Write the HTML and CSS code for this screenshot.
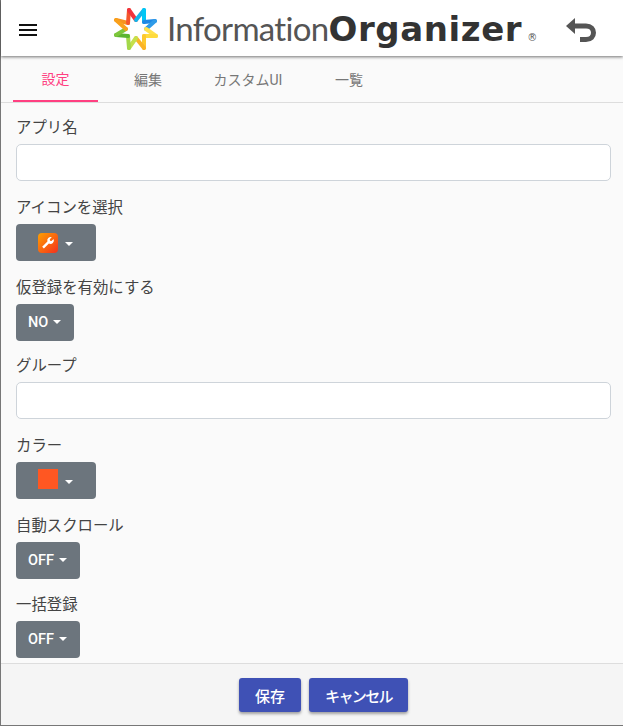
FILE: index.html
```html
<!DOCTYPE html>
<html lang="ja">
  <head>
    <meta charset="UTF-8" />
    <title>Information Organizer</title>
    <link rel="stylesheet" href="styles.css">
  </head>
  <body>
    <div class="page">
      <header class="topbar">
        <svg class="menu-icon" width="18" height="12" viewBox="0 0 18 12">
          <path d="M0 1h18M0 6h18M0 11h18" stroke="#111" stroke-width="2" fill="none" />
        </svg>
        <div class="brand">
          <svg class="brand-mark" width="46" height="44" viewBox="0 0 46 44">
            <g fill="none" stroke-width="4" stroke-linecap="round" stroke-linejoin="round">
              <path d="M3 13L15 16" stroke="#f7931e" />
              <path d="M15 16L16 3" stroke="#f4562c" />
              <path d="M16 3L23 13" stroke="#f0333c" />
              <path d="M23 13L31 3" stroke="#12b5ea" />
              <path d="M31 3L31 15" stroke="#00c6f5" />
              <path d="M31 15L42 14" stroke="#1e88e5" />
              <path d="M42 14L33 22" stroke="#2f9be8" />
              <path d="M33 22L43 29" stroke="#ffe14d" />
              <path d="M43 29L31 29" stroke="#ffdb3d" />
              <path d="M31 29L31 41" stroke="#fdc82f" />
              <path d="M31 41L23 31" stroke="#fbb326" />
              <path d="M23 31L16 41" stroke="#c5e04c" />
              <path d="M16 41L15 29" stroke="#a3d84a" />
              <path d="M15 29L3 28" stroke="#5cb531" />
              <path d="M3 28L13 22" stroke="#7dc63b" />
              <path d="M13 22L3 13" stroke="#f9a01b" />
            </g>
          </svg>
          <span class="brand-text">
            <span class="brand-light">Information</span><span class="brand-bold">Organizer</span><span class="brand-reg">®</span>
          </span>
        </div>
        <svg class="back-icon" width="32" height="26" viewBox="0 0 32 26">
          <path d="M0 9L9 1V17Z" fill="#555" />
          <path d="M7 9H20C30 9 30 22.500 20 22.500H14" fill="none" stroke="#555" stroke-width="5" />
        </svg>
      </header>

      <nav class="tabs">
        <a class="tab tab-active">設定</a>
        <a class="tab tab-edit">編集</a>
        <a class="tab tab-custom">カスタムUI</a>
        <a class="tab tab-list">一覧</a>
      </nav>

      <main class="content">
        <div class="form-group">
          <label>アプリ名</label>
          <input class="form-input" type="text" />
        </div>
        <div class="form-group">
          <label>アイコンを選択</label>
          <button class="drop-btn drop-btn-icon">
            <span class="app-icon">
              <svg width="14" height="14" viewBox="0 0 24 24">
                <path d="M21.500 5l-3.500 3.500-2.500-.5-.5-2.500 3.500-3.500a6 6 0 0 0-7.500 7.500L2 18.500 5 21.500l8.500-8.500a6 6 0 0 0 8-8z" fill="#fff" />
              </svg>
            </span>
            <span class="caret"></span>
          </button>
        </div>
        <div class="form-group form-group-tight">
          <label>仮登録を有効にする</label>
          <button class="drop-btn">NO<span class="caret caret-text"></span></button>
        </div>
        <div class="form-group">
          <label>グループ</label>
          <input class="form-input" type="text" />
        </div>
        <div class="form-group">
          <label>カラー</label>
          <button class="drop-btn drop-btn-icon">
            <span class="color-chip"></span>
            <span class="caret"></span>
          </button>
        </div>
        <div class="form-group form-group-mid">
          <label>自動スクロール</label>
          <button class="drop-btn">OFF<span class="caret caret-text"></span></button>
        </div>
        <div class="form-group">
          <label>一括登録</label>
          <button class="drop-btn">OFF<span class="caret caret-text"></span></button>
        </div>
      </main>

      <footer class="actions">
        <button class="action-btn">保存</button>
        <button class="action-btn action-btn-long">キャンセル</button>
      </footer>
    </div>
  </body>
</html>
```

FILE: styles.css
```css
* {
  box-sizing: border-box;
}
html,
body {
  height: 100%;
}
body {
  margin: 0;
  font-family: Roboto, "Noto Sans CJK JP", sans-serif;
  color: #444;
  background: #fafafa;
  overflow: hidden;
}
.page {
  height: 726px;
  display: flex;
  flex-direction: column;
  border-left: 1px solid #777;
  border-bottom: 1px solid #777;
}
.topbar {
  height: 56px;
  flex: none;
  display: flex;
  align-items: center;
  background: #fff;
  box-shadow: 0 1px 3px rgba(0, 0, 0, 0.55);
  position: relative;
  z-index: 1;
}
.menu-icon {
  margin-left: 18px;
  margin-top: 4px;
  flex: none;
}
.brand {
  margin-left: 76px;
  display: flex;
  align-items: center;
  white-space: nowrap;
  width: 428px;
  flex: none;
}
.brand-mark {
  margin-top: 2px;
  margin-right: 8px;
  flex: none;
}
.brand-text {
  margin-top: 10px;
  font-size: 33px;
  line-height: 44px;
}
.brand-light {
  font-family: Lato, sans-serif;
  color: #555;
  font-weight: 400;
  letter-spacing: -0.700px;
}
.brand-bold {
  font-family: "DejaVu Sans", sans-serif;
  font-size: 34px;
  color: #333;
  font-weight: 700;
  letter-spacing: 0.600px;
}
.brand-reg {
  font-family: "DejaVu Sans", sans-serif;
  color: #555;
  font-size: 10px;
  margin-left: 5px;
}
.back-icon {
  margin-left: 25px;
  margin-top: 3px;
  flex: none;
}
.tabs {
  height: 47px;
  flex: none;
  display: flex;
  padding-left: 12px;
  background: #fafafa;
  border-bottom: 1px solid #ddd;
}
.tab {
  display: flex;
  align-items: center;
  justify-content: center;
  height: 46px;
  font-size: 14px;
  color: #777;
}
.tab-active {
  width: 85px;
  color: #ff4081;
  border-bottom: 2px solid #ff4081;
}
.tab-edit {
  width: 100px;
}
.tab-custom {
  width: 100px;
}
.tab-list {
  width: 102px;
}
.content {
  flex: 1;
  min-height: 0;
  overflow: hidden;
  padding: 12px 12px 0 15px;
}
.form-group {
  margin-bottom: 14px;
}
.form-group-tight {
  margin-bottom: 12px;
}
.form-group-mid {
  margin-bottom: 13px;
}
label {
  display: block;
  font-size: 15.400px;
  line-height: 24px;
  padding-top: 1px;
  height: 25px;
  margin-bottom: 4px;
}
.form-input {
  display: block;
  width: 100%;
  height: 37px;
  border: 1px solid #ced4da;
  border-radius: 5px;
  background: #fff;
}
.drop-btn {
  display: inline-flex;
  align-items: center;
  height: 37px;
  padding: 0 13px 0 12px;
  border: none;
  border-radius: 4px;
  background: #6c757d;
  color: #fff;
  font-family: inherit;
  font-size: 14.500px;
  font-weight: 500;
  vertical-align: top;
}
.drop-btn-icon {
  width: 80px;
  padding: 0 0 0 22px;
}
.caret {
  width: 0;
  height: 0;
  margin-left: 7px;
  margin-top: 3px;
  border-top: 4px solid #fff;
  border-left: 4px solid transparent;
  border-right: 4px solid transparent;
}
.caret-text {
  margin-left: 5px;
  margin-top: -2px;
}
.app-icon {
  width: 20px;
  height: 20px;
  display: flex;
  align-items: center;
  justify-content: center;
  border-radius: 4px;
  background: linear-gradient(135deg, #ffa000, #f4301e);
}
.color-chip {
  width: 20px;
  height: 20px;
  margin-top: -4px;
  background: #ff5722;
}
.actions {
  height: 62px;
  flex: none;
  display: flex;
  justify-content: center;
  align-items: flex-start;
  gap: 8px;
  padding: 14px 0 0 23px;
  background: #f5f5f5;
  border-top: 1px solid #ddd;
}
.action-btn {
  height: 34px;
  padding: 0 16px;
  border: none;
  border-radius: 3px;
  background: #3f51b5;
  color: #fff;
  font-family: inherit;
  font-size: 15px;
  font-weight: 500;
  box-shadow: 0 2px 3px rgba(0, 0, 0, 0.35);
}
.action-btn-long {
  letter-spacing: -1.600px;
}
```
